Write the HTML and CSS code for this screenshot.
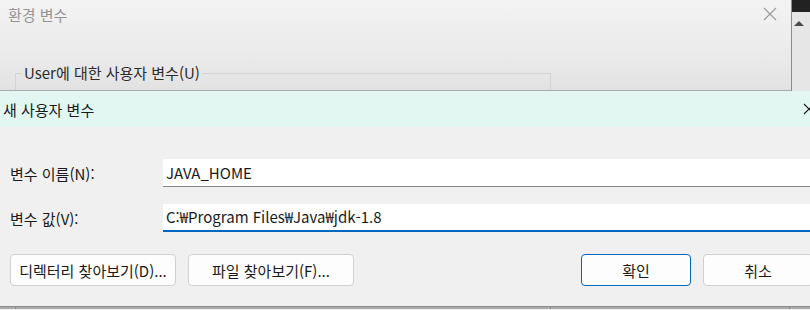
FILE: index.html
```html
<!DOCTYPE html>
<html lang="ko">

<head>
  <meta charset="UTF-8">
  <title>새 사용자 변수</title>
  <link rel="stylesheet" href="styles.css">
</head>

<body>
  <!-- Parent window behind the dialog -->
  <section class="env-window">
    <div class="env-main">
      <div class="env-title">
        <span>환경 변수</span>
        <svg class="env-close" width="14" height="14" viewBox="0 0 14 14">
          <path d="M1 1 L13 13 M13 1 L1 13" stroke="#9a9a9a" stroke-width="1.1" fill="none" />
        </svg>
      </div>
      <fieldset class="group-box">
        <legend>User에 대한 사용자 변수(U)</legend>
      </fieldset>
    </div>
    <div class="side-bar">
      <svg class="side-art" width="19" height="91" viewBox="0 0 19 91">
        <rect x="0" y="0" width="19" height="91" fill="#e6e6e6" />
        <rect x="0" y="0" width="1" height="91" fill="#8c8c8c" />
        <rect x="1" y="0" width="18" height="12" fill="#222222" />
        <path d="M3 26 L8 21 L13 26 Z" fill="#4a4a4a" />
      </svg>
    </div>
  </section>

  <!-- New user variable dialog -->
  <section class="dialog">
    <header class="dialog-title">
      <span>새 사용자 변수</span>
      <svg class="dialog-close" width="12" height="12" viewBox="0 0 12 12">
        <path d="M1 1 L11 11 M11 1 L1 11" stroke="#1a1a1a" stroke-width="1.2" fill="none" />
      </svg>
    </header>

    <div class="dialog-body">
      <div class="fields">
        <label for="var-name">변수 이름(N):</label>
        <input id="var-name" class="field" type="text" value="JAVA_HOME">
        <label for="var-value">변수 값(V):</label>
        <input id="var-value" class="field field-active" type="text" value="C:₩Program Files₩Java₩jdk-1.8">
      </div>

      <div class="actions">
        <button class="btn btn-wide">디렉터리 찾아보기(D)...</button>
        <button class="btn btn-wide">파일 찾아보기(F)...</button>
        <span class="spacer"></span>
        <button class="btn btn-primary">확인</button>
        <button class="btn">취소</button>
      </div>
    </div>
  </section>

  <div class="under-strip">
    <span class="seg seg-a"></span>
    <span class="seg seg-b"></span>
    <span class="seg seg-c"></span>
    <span class="seg seg-d"></span>
  </div>
</body>

</html>
```

FILE: styles.css
```css
/* Basic Reset */
* {
  margin: 0;
  padding: 0;
  box-sizing: border-box;
}

html,
body {
  overflow: hidden;
}

body {
  width: 810px;
  height: 310px;
  font-family: 'Noto Sans CJK KR', 'Noto Sans', sans-serif;
  font-size: 15px;
  color: #1a1a1a;
  background-color: #f0f0f0;
}

/* Parent window */
.env-window {
  display: flex;
  height: 91px;
  background: linear-gradient(#f3f3f3, #e9e9e9 70%, #e2e2e2);
  border-bottom: 1px solid #a9a9a9;
}

.env-main {
  width: 791px;
  display: flex;
  flex-direction: column;
}

.env-title {
  display: flex;
  justify-content: space-between;
  align-items: center;
  height: 28px;
  padding: 0 14px 0 8px;
  color: #949494;
}

.group-box {
  flex: 1;
  width: 536px;
  margin: 39px 0 0 15px;
  border: 1px solid #d3d3d3;
  border-bottom: none;
}

.group-box legend {
  margin-left: 6px;
  padding: 0 2px;
  line-height: 12px;
  color: #2b2b2b;
}

.side-bar {
  width: 19px;
  flex-shrink: 0;
}

.side-art {
  display: block;
}

/* Dialog (wider than the screen, clipped on the right) */
.dialog {
  width: 810px;
  height: 215px;
  overflow: hidden;
  display: flex;
  flex-direction: column;
}

.dialog-title {
  display: flex;
  justify-content: space-between;
  align-items: center;
  height: 36px;
  padding-left: 3px;
  background-color: #e3f7f2;
}

.dialog-close {
  margin-right: -5px;
}

.dialog-body {
  flex: 1;
  padding: 32px 0 0 10px;
}

.fields,
.actions {
  width: 803px;
}

.fields {
  display: grid;
  grid-template-columns: 153px 1fr;
  row-gap: 17px;
  align-items: center;
}

.field {
  height: 28px;
  padding: 0 3px 1px;
  border: none;
  border-bottom: 1px solid #868686;
  background-color: #fff;
  font: inherit;
  color: #1a1a1a;
  outline: none;
}

.field-active {
  border-bottom: 2px solid #0067c0;
}

.actions {
  display: flex;
  gap: 12px;
  margin-top: 22px;
}

.spacer {
  flex: 1;
}

.btn {
  flex-shrink: 0;
  width: 110px;
  height: 32px;
  border: 1px solid #d0d0d0;
  border-radius: 4px;
  background-color: #fdfdfd;
  font: inherit;
  color: #1a1a1a;
}

.btn-wide {
  width: 166px;
}

.btn-primary {
  border-color: #0067c0;
}

/* Window edge below the dialog */
.under-strip {
  display: flex;
  height: 3px;
  border-top: 1px solid #8e8e8e;
  background-color: #aaaaaa;
}

.seg {
  border-left: 1px solid #8a8a8a;
}

.seg-a {
  width: 15px;
  border-left: none;
}

.seg-b {
  width: 535px;
}

.seg-c {
  width: 239px;
}

.seg-d {
  flex: 1;
}
```
